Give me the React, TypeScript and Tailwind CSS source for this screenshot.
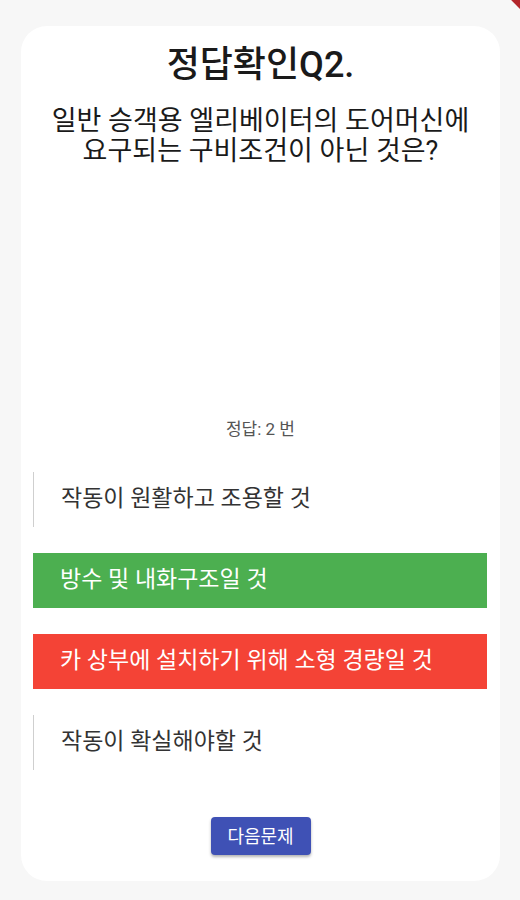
import React from "react";

const font = { fontFamily: "Roboto, 'Noto Sans CJK KR', sans-serif" };

export default function App() {
  return (
    <div className="relative w-[520px] h-[900px] bg-[#f7f7f7] overflow-hidden" style={font}>
      <div className="absolute top-[-14px] right-[-34px] w-[80px] h-[14px] bg-[#b3262b] rotate-45 origin-center" />
      <div className="pt-[26px] pl-[21px]">
        <div className="w-[479px] h-[855px] bg-white rounded-[26px] flex flex-col items-center">
          <h1 className="mt-[17px] text-[36px] leading-[44px] font-medium text-[#1a1a1a]">정답확인Q2.</h1>
          <p className="mt-[19px] text-[27px] leading-[30px] text-[#1a1a1a] text-center">
            일반 승객용 엘리베이터의 도어머신에
            <br />
            요구되는 구비조건이 아닌 것은?
          </p>
          <div className="mt-[252px] text-[17px] leading-[22px] text-[#555]">정답: 2 번</div>
          <div className="mt-[32px] w-full flex flex-col gap-[26px] pl-[12px] pr-[13px]">
            <div className="h-[55px] border-l border-[#cfcfcf] flex items-center pl-[27px] text-[23px] text-[#333]">
              작동이 원활하고 조용할 것
            </div>
            <div className="h-[55px] bg-[#4caf50] flex items-center pl-[27px] text-[23px] text-white">
              방수 및 내화구조일 것
            </div>
            <div className="h-[55px] bg-[#f44336] flex items-center pl-[27px] text-[23px] text-white">
              카 상부에 설치하기 위해 소형 경량일 것
            </div>
            <div className="h-[55px] border-l border-[#cfcfcf] flex items-center pl-[27px] text-[23px] text-[#333]">
              작동이 확실해야할 것
            </div>
          </div>
          <button className="mt-[47px] w-[100px] h-[38px] bg-[#3f51b5] rounded-[4px] text-white text-[18px] shadow-[0_2px_3px_rgba(0,0,0,0.3)]">
            다음문제
          </button>
        </div>
      </div>
    </div>
  );
}
